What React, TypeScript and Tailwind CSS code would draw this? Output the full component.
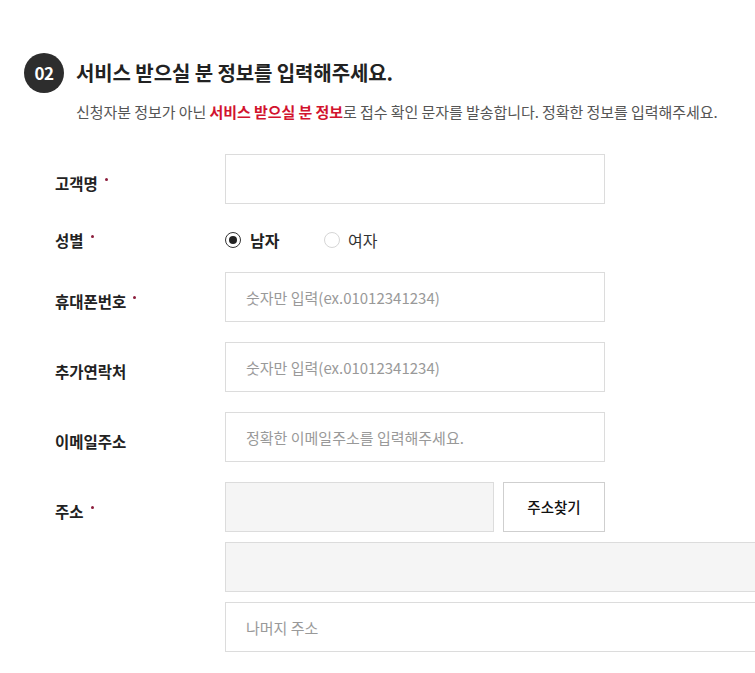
import { useState } from "react";

const FONT = { fontFamily: '"Noto Sans CJK KR", "Noto Sans", sans-serif' };

const Label = ({ text, required }: { text: string; required?: boolean }) => (
  <div className="w-[170px] shrink-0 flex items-center h-[20px] text-[15.5px] font-bold text-[#222] leading-[20px]">
    <span>{text}</span>
    {required && (
      <span className="ml-[7px] mb-[7px] w-[3px] h-[3px] rounded-full bg-[#8c1d3c]"></span>
    )}
  </div>
);

const TextInput = ({
  placeholder,
  className = "w-[380px]",
  disabled,
}: {
  placeholder?: string;
  className?: string;
  disabled?: boolean;
}) => (
  <input
    type="text"
    placeholder={placeholder}
    disabled={disabled}
    className={`${className} h-[50px] shrink-0 border border-[#dcdcdc] px-[20px] text-[15px] text-[#333] outline-none placeholder:text-[#999] ${
      disabled ? "bg-[#f5f5f5]" : "bg-white"
    }`}
    style={FONT}
  />
);

const Radio = ({ checked }: { checked: boolean }) => (
  <span
    className={`w-[16px] h-[16px] rounded-full flex items-center justify-center ${
      checked ? "border border-[#333]" : "border border-[#d6d6d6]"
    }`}
  >
    {checked && <span className="w-[8px] h-[8px] rounded-full bg-[#222]"></span>}
  </span>
);

const App = () => {
  const [gender, setGender] = useState("male");

  return (
    <div className="w-full min-h-screen bg-white overflow-hidden" style={FONT}>
      <div className="pl-[24px] pt-[53px] pb-[20px]">
        <div className="flex items-center gap-[12px]">
          <div className="w-[40px] h-[40px] rounded-full bg-[#2d2d2d] flex items-center justify-center text-white font-bold text-[17px] tracking-[-0.5px]">
            02
          </div>
          <h2 className="text-[20px] font-bold text-[#222] tracking-[-0.1px]">
            서비스 받으실 분 정보를 입력해주세요.
          </h2>
        </div>
        <p className="mt-[9px] pl-[52px] text-[15px] leading-[20px] text-[#555] tracking-[-0.07px] whitespace-nowrap">
          신청자분 정보가 아닌{" "}
          <span className="font-bold text-[#d2132e]">서비스 받으실 분 정보</span>로
          접수 확인 문자를 발송합니다. 정확한 정보를 입력해주세요.
        </p>

        <div className="mt-[32px] pl-[31px]">
          <div className="flex">
            <div className="pt-[19px]">
              <Label text="고객명" required />
            </div>
            <TextInput />
          </div>

          <div className="mt-[18px] flex items-center h-[36px]">
            <Label text="성별" required />
            <div className="flex items-center text-[16px] text-[#333]">
              <button
                className="w-[99px] flex items-center gap-[9px]"
                onClick={() => setGender("male")}
              >
                <Radio checked={gender === "male"} />
                <span className={gender === "male" ? "font-semibold text-[#222]" : ""}>남자</span>
              </button>
              <button className="flex items-center gap-[8px]" onClick={() => setGender("female")}>
                <Radio checked={gender === "female"} />
                <span className={gender === "female" ? "font-semibold text-[#222]" : ""}>여자</span>
              </button>
            </div>
          </div>

          <div className="mt-[14px] flex">
            <div className="pt-[19px]">
              <Label text="휴대폰번호" required />
            </div>
            <TextInput placeholder="숫자만 입력(ex.01012341234)" />
          </div>

          <div className="mt-[20px] flex">
            <div className="pt-[19px]">
              <Label text="추가연락처" />
            </div>
            <TextInput placeholder="숫자만 입력(ex.01012341234)" />
          </div>

          <div className="mt-[20px] flex">
            <div className="pt-[19px]">
              <Label text="이메일주소" />
            </div>
            <TextInput placeholder="정확한 이메일주소를 입력해주세요." />
          </div>

          <div className="mt-[20px] flex">
            <div className="pt-[19px]">
              <Label text="주소" required />
            </div>
            <div className="flex flex-col gap-[10px]">
              <div className="flex gap-[9px]">
                <TextInput className="w-[269px]" disabled />
                <button className="w-[102px] h-[50px] border border-[#cfcfcf] bg-white text-[14.5px] font-medium text-[#111]">
                  주소찾기
                </button>
              </div>
              <TextInput className="w-[600px]" disabled />
              <TextInput className="w-[600px]" placeholder="나머지 주소" />
            </div>
          </div>
        </div>
      </div>
    </div>
  );
};

export default App;
